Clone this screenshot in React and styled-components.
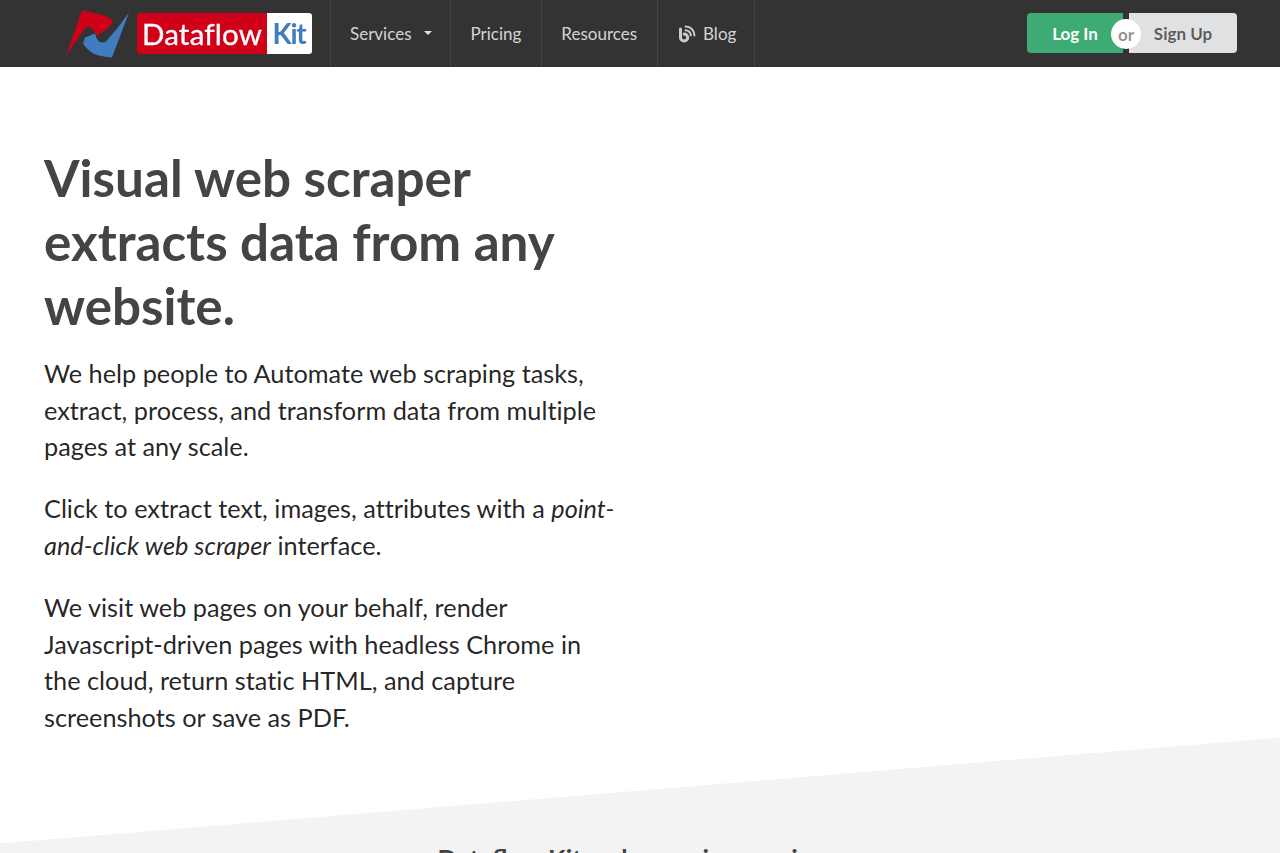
import React from 'react';
import styled, { createGlobalStyle } from 'styled-components';

const Global = createGlobalStyle`
  html, body { margin: 0; padding: 0; background: #fff; overflow: hidden; height: 853px; }
  body { font-family: Lato, "Liberation Sans", sans-serif; color: rgba(0,0,0,.87); }
  * { box-sizing: border-box; }
`;
const Nav = styled.header`
  height: 67px; background: #333; display: flex; align-items: stretch; padding: 0 43px 0 65px;
`;
const Brand = styled.div`
  width: 265px; display: flex; align-items: center; flex: none; gap: 6px;
`;
const LogoBox = styled.div`
  display: flex; height: 41px; width: 175px; border-radius: 3px; overflow: hidden; filter: blur(.3px);
`;
const LogoRed = styled.span`
  width: 130px; background: #cf0018; color: #fff; font-size: 29.5px; line-height: 41px; text-align: center; letter-spacing: .2px; white-space: nowrap; -webkit-text-stroke: .35px #fff;
`;
const LogoKit = styled.span`
  flex: 1; background: #fff; color: #3f7cc0; font-size: 28px; font-weight: 700; line-height: 41px; text-align: center; letter-spacing: -1.2px; padding-right: 1px;
`;
const Menu = styled.nav`
  display: flex; border-left: 1px solid #454545;
`;
const Item = styled.a`
  display: flex; align-items: center; gap: ${p => p.$gap || 0}px; padding: 0 ${p => p.$pr}px 0 ${p => p.$pl}px; color: rgba(255,255,255,.8); font-size: 17px;
  border-right: 1px solid #454545;
`;
const Caret = styled.i`
  width: 0; height: 0; border-left: 4.5px solid transparent; border-right: 4.5px solid transparent; border-top: 4.5px solid rgba(255,255,255,.85); margin-left: 12px; margin-top: -2px;
`;
const Auth = styled.div`
  margin-left: auto; display: flex; align-items: center; position: relative; padding-bottom: 1px;
`;
const AuthBtn = styled.button`
  height: 40px; border: 0; padding: 0; font: 700 17px Lato, sans-serif; width: ${p => p.$w}px;
  background: ${p => p.$green ? '#3dab74' : '#e0e1e2'}; color: ${p => p.$green ? '#fff' : 'rgba(0,0,0,.6)'};
  border-radius: ${p => p.$green ? '4px 0 0 4px' : '0 4px 4px 0'}; margin-left: ${p => p.$green ? 0 : 6}px;
  text-align: center;
`;
const Or = styled.span`
  position: absolute; left: 84px; top: 50%; transform: translateY(-50%); width: 30px; height: 30px; border-radius: 50%; background: #fff; color: rgba(0,0,0,.45); font-size: 17px; font-weight: 700; line-height: 31px; text-align: center;
`;
const Hero = styled.main`
  width: 619px; padding: 78px 0 2px 44px;
`;
const Title = styled.h1`
  margin: 0 0 18px; font-size: 51.2px; line-height: 64px; font-weight: 700; color: #444;
`;
const Para = styled.p`
  margin: 0 0 25.6px; font-size: 25.3px; line-height: 36.6px; color: rgba(0,0,0,.87); font-variant-ligatures: none;
  &:last-child { margin-bottom: 0; }
`;
const Slant = styled.section`
  height: 300px; background: #f3f3f3;
  clip-path: polygon(0 106px, 100% 0, 100% 100%, 0 100%);
`;
const SlantTitle = styled.h2`
  margin: 0; padding: 100px 19px 0 0; text-align: center; font-size: 25.6px; line-height: 40px; font-weight: 700; color: #444;
`;
const Logo = () => (
  <svg width="66" height="48" viewBox="65 9.5 66 48" style={{ flex: 'none' }}>
    <path d="M66 55 L82 10 L105 15 Q114 19 112 23 Q105 31 97 35 L92 28 Q88 24 85 28 Z" fill="#cf0018" />
    <path d="M129 12 L112 57 Q100 56 93 53 Q86 48 83 43 L85 37 L95 33 Q96 38 99 41 Q102 43 106 41 Q118 28 129 12 Z" fill="#3f7cc0" />
  </svg>
);
const Feed = () => (
  <svg width="18" height="18" viewBox="0 0 18 18" fill="none" stroke="rgba(255,255,255,.75)" strokeLinecap="round">
    <path d="M2.5 4v8.5a3.6 3.6 0 1 0 3.6-3.6" strokeWidth="3" />
    <path d="M7.5 5.2a5.3 5.3 0 0 1 5.3 5.3" strokeWidth="2" />
    <path d="M7.5 1.4a9 9 0 0 1 9 9" strokeWidth="2" />
  </svg>
);
export default function App() {
  return (
    <>
      <Global />
      <Nav>
        <Brand><Logo /><LogoBox><LogoRed>Dataflow</LogoRed><LogoKit>Kit</LogoKit></LogoBox></Brand>
        <Menu>
          <Item $pl={19} $pr={18}>Services<Caret /></Item>
          <Item $pl={20} $pr={20}>Pricing</Item>
          <Item $pl={19} $pr={20}>Resources</Item>
          <Item $pl={20} $pr={18} $gap={7}><Feed />Blog</Item>
        </Menu>
        <Auth>
          <AuthBtn $green $w={96}>Log In</AuthBtn>
          <AuthBtn $w={108}>Sign Up</AuthBtn>
          <Or>or</Or>
        </Auth>
      </Nav>
      <Hero>
        <Title>Visual web scraper extracts data from any website.</Title>
        <Para>We help people to Automate web scraping tasks, extract, process, and transform data from multiple pages at any scale.</Para>
        <Para>Click to extract text, images, attributes with a <em>point-and-click web scraper</em> interface.</Para>
        <Para>We visit web pages on your behalf, render Javascript-driven pages with headless Chrome in the cloud, return static HTML, and capture screenshots or save as PDF.</Para>
      </Hero>
      <Slant><SlantTitle>Dataflow Kit web scraping service</SlantTitle></Slant>
    </>
  );
}
